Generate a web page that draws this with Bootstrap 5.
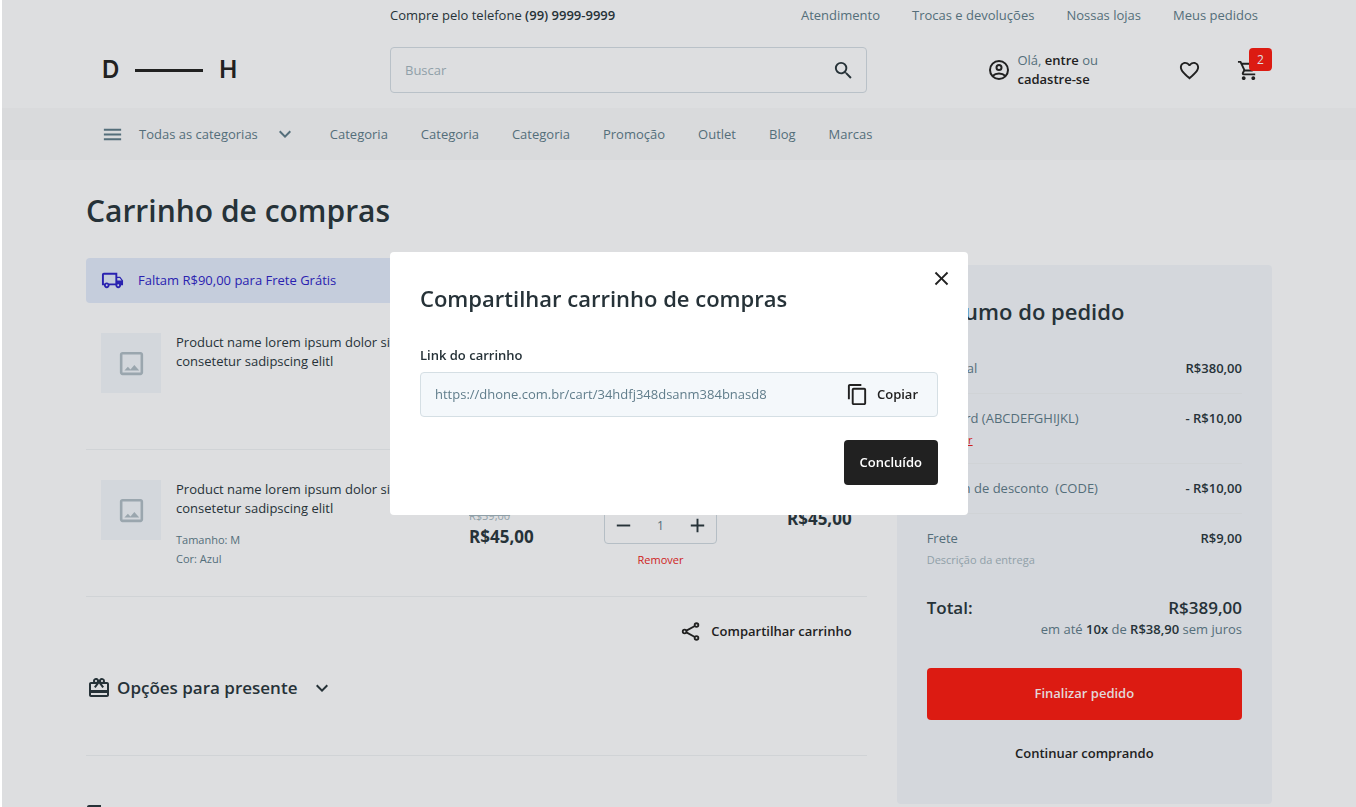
<!DOCTYPE html>
<html lang="pt-BR">
<head>
<meta charset="utf-8">
<meta name="viewport" content="width=device-width, initial-scale=1">
<title>Carrinho de compras</title>
<link href="https://cdn.jsdelivr.net/npm/bootstrap@5.3.0/dist/css/bootstrap.min.css" rel="stylesheet">
<style>
  :root { --ink: #263238; --black: #212121; --slate: #546e7a; --muted: #90a0a8; --line: #d0d3d6; --red: #dc1b12; }
  body { font-family: "Open Sans", sans-serif; font-size: 13px; line-height: 19px; color: var(--ink); background: #fff; padding-left: 2px; }
  .page { background: #dddee0; min-height: 100vh; }
  .shell { max-width: 1186px; margin-inline: auto; }
  .row { --bs-gutter-x: 30px; }
  a { color: var(--slate); text-decoration: none; }
  svg { display: block; fill: currentColor; flex: none; }
  strong, .semi { font-weight: 600; }
  .plain { background: none; border: 0; padding: 0; color: inherit; }
  .ink { color: var(--ink); }
  .black { color: var(--black); }
  .slate { color: var(--slate); }
  .faded { color: var(--muted); }
  .alertred { color: #cf1d22; }
  .fine { font-size: 11px; line-height: 19px; }
  .lined { fill: none; stroke: currentColor; stroke-width: 2; }

  .topbar { padding-top: 6px; }
  .topbar nav { gap: 32px; padding-right: 14px; }
  .masthead { padding: 22px 0 15px; }
  .logo { font: 600 24px/28px Inter, sans-serif; color: var(--black); padding-left: 16px; gap: 16px; }
  .logo i { width: 68px; height: 3px; background: var(--black); }
  .search { border: 1px solid #b9c1c8; border-radius: 4px; height: 46px; padding: 0 11px 0 14px; }
  .search input, .copybox input { font-size: 13px; background: none; border: 0; padding: 0; outline: 0; color: #607d8b; }
  .search input::placeholder { color: var(--muted); opacity: 1; }
  .usertools { padding-right: 12px; }
  .account { gap: 6px; margin-right: 80px; }
  .fav { margin-right: 36px; }
  .count { top: -11px; right: -12px; width: 23px; height: 23px; border-radius: 4px; background: var(--red); color: #dddee0; font-size: 12px; line-height: 23px; text-align: center; }

  .catbar { background: #d9dadc; height: 52px; }
  .catbar .shell { padding-left: 15px; gap: 33px; }
  .catbar button { gap: 15px; color: var(--slate); }

  h1 { font-size: 30px; line-height: 42px; font-weight: 600; margin: 30px 0 0; }
  h2 { font-size: 22px; line-height: 32px; font-weight: 600; margin: 0; }
  .freight { background: #c5cddc; color: #2a22b0; border-radius: 4px; height: 45px; padding: 0 15px; gap: 14px; margin-top: 26px; }
  .product { min-height: 147px; padding: 30px 15px 27px; border-bottom: 1px solid var(--line); }
  .thumb { width: 60px; height: 60px; background: #d3d7dc; color: #9aa6ae; margin-right: 15px; flex: none; }
  .desc { width: 293px; }
  .price { width: 135px; padding-top: 26px; }
  .amount { font-size: 17px; line-height: 24px; font-weight: 700; }
  .qty { width: 113px; padding-top: 26px; }
  .stepper { height: 38px; border: 1px solid #b5bec5; border-radius: 4px; padding: 0 7px; margin-bottom: 6px; }
  .stepper input { width: 30px; border: 0; background: none; text-align: center; color: var(--slate); padding: 0; font-size: 12px; }
  .sum { padding-top: 27px; }
  .share { padding: 23px 15px 0; }
  .share button { gap: 9px; }
  .extra { border-bottom: 1px solid var(--line); padding: 33px 0 55px; }
  .extra button { font-size: 17px; line-height: 24px; font-weight: 600; gap: 6px; padding-left: 1px; }
  .chev { margin-left: 7px; }
  .nextpart { padding-top: 46px; }

  .summary { background: #d4d7dc; border-radius: 4px; padding: 30px; margin-top: 33px; }
  .summary dl { margin: 17px 0 0; }
  .entry { padding: 15px 0; border-bottom: 1px solid var(--line); }
  .entry:last-child { border: 0; }
  .summary dt { font-weight: 400; color: var(--slate); }
  .summary dd { margin: 0; font-weight: 600; }
  .subline { margin-top: 3px; line-height: 17px; font-size: 11px; }
  .grand { font-size: 17px; line-height: 24px; font-weight: 600; margin-top: 13px; }
  .btn { font-size: 13px; font-weight: 600; border-radius: 4px; border: 0; }
  .btn-pay, .btn-pay:hover { background: var(--red); color: #e3d7d9; height: 52px; margin-top: 29px; }
  .btn-more { height: 40px; margin-top: 14px; color: var(--black); }

  .modal { --bs-modal-width: 578px; left: 2px; width: auto; right: 0; }
  .modal-dialog { margin-top: 252px; }
  .modal-content { border: 0; border-radius: 4px; padding: 30px; color: var(--ink); }
  .dismiss { top: 15px; right: 15px; color: var(--black); }
  .modal label { margin: 32px 0 7px; font-weight: 600; }
  .copybox { background: #f4f8fb; border: 1px solid #d5dfe4; border-radius: 4px; height: 45px; padding: 0 19px 0 14px; }
  .copybox button { gap: 8px; }
  .btn-done, .btn-done:hover { background: var(--black); color: #fff; height: 45px; padding: 0 16px; margin-top: 23px; }
</style>
</head>
<body class="overflow-hidden">
<div class="page">
  <header>
    <div class="shell topbar">
      <div class="row">
        <div class="col-9 offset-3 d-flex justify-content-between">
          <span>Compre pelo telefone <strong>(99) 9999-9999</strong></span>
          <nav class="d-flex" aria-label="Ajuda">
            <a href="#">Atendimento</a><a href="#">Trocas e devoluções</a><a href="#">Nossas lojas</a><a href="#">Meus pedidos</a>
          </nav>
        </div>
      </div>
    </div>
    <div class="shell masthead">
      <div class="row align-items-center">
        <div class="col-3"><a href="#" class="logo d-flex align-items-center"><span>D</span><i></i><span>H</span></a></div>
        <div class="col-5">
          <form class="search d-flex align-items-center">
            <input class="flex-grow-1" type="search" placeholder="Buscar" aria-label="Buscar">
            <button type="button" class="plain ink" aria-label="Pesquisar"><svg width="23" height="23" viewBox="0 0 24 24"><path d="M15.5 14h-.79l-.28-.27A6.47 6.47 0 0 0 16 9.500 6.500 6.500 0 1 0 9.500 16c1.610 0 3.090-.59 4.230-1.570l.27.28v.79l5 4.990L20.490 19l-4.990-5zm-6 0C7.010 14 5 11.990 5 9.500S7.010 5 9.500 5 14 7.010 14 9.500 11.990 14 9.500 14z"/></svg></button>
          </form>
        </div>
        <div class="col-4">
          <div class="usertools d-flex align-items-center justify-content-end black">
            <div class="account d-flex align-items-center">
              <svg class="lined" width="24" height="24" viewBox="0 0 24 24"><circle cx="12" cy="12" r="9"/><circle cx="12" cy="9.500" r="2.500"/><path d="M5.500 18c1.800-1.600 4-2.400 6.500-2.400s4.700.8 6.500 2.400"/></svg>
              <div class="slate">Olá, <a href="#" class="semi black">entre</a> ou<br><a href="#" class="semi black">cadastre-se</a></div>
            </div>
            <a href="#" class="fav black" aria-label="Favoritos"><svg width="23" height="23" viewBox="0 0 24 24"><path d="M16.500 3c-1.740 0-3.410.81-4.500 2.090C10.910 3.810 9.240 3 7.500 3 4.420 3 2 5.420 2 8.500c0 3.780 3.400 6.860 8.550 11.540L12 21.350l1.450-1.320C18.600 15.360 22 12.280 22 8.500 22 5.420 19.580 3 16.500 3zm-4.400 15.550-.1.1-.1-.1C7.140 14.240 4 11.390 4 8.500 4 6.500 5.500 5 7.500 5c1.540 0 3.040.99 3.570 2.360h1.870C13.460 5.990 14.960 5 16.500 5c2 0 3.500 1.500 3.500 3.500 0 2.890-3.140 5.740-7.900 10.050z"/></svg></a>
            <a href="#" class="position-relative black" aria-label="Carrinho"><svg width="23" height="23" viewBox="0 0 24 24"><path d="M15.550 13c.75 0 1.410-.41 1.750-1.030l3.580-6.490A.996.996 0 0 0 20.010 4H5.210l-.94-2H1v2h2l3.600 7.590-1.350 2.440C4.520 15.370 5.480 17 7 17h12v-2H7l1.100-2h7.450zM6.160 6h12.150l-2.760 5H8.530L6.160 6zM7 18c-1.100 0-1.990.9-1.990 2S5.900 22 7 22s2-.9 2-2-.9-2-2-2zm10 0c-1.100 0-1.990.9-1.990 2s.89 2 1.990 2 2-.9 2-2-.9-2-2-2z"/></svg><span class="count position-absolute">2</span></a>
          </div>
        </div>
      </div>
    </div>
    <nav class="catbar" aria-label="Categorias">
      <div class="shell d-flex align-items-center h-100">
        <button type="button" class="plain slate d-flex align-items-center">
          <svg width="23" height="23" viewBox="0 0 24 24"><path d="M3 18h18v-2H3v2zm0-5h18v-2H3v2zm0-7v2h18V6H3z"/></svg>
          Todas as categorias
          <svg width="24" height="24" viewBox="0 0 24 24"><path d="M7.410 8.590 12 13.170l4.590-4.580L18 10l-6 6-6-6z"/></svg>
        </button>
        <a href="#">Categoria</a><a href="#">Categoria</a><a href="#">Categoria</a><a href="#">Promoção</a><a href="#">Outlet</a><a href="#">Blog</a><a href="#">Marcas</a>
      </div>
    </nav>
  </header>

  <main class="shell">
    <h1>Carrinho de compras</h1>
    <div class="row">
      <section class="col-8">
        <div class="freight d-flex align-items-center">
          <svg width="23" height="23" viewBox="0 0 24 24"><path fill-rule="evenodd" d="M20 8h-3V4H3c-1.100 0-2 .9-2 2v11h2c0 1.660 1.340 3 3 3s3-1.340 3-3h6c0 1.660 1.340 3 3 3s3-1.340 3-3h2v-5l-3-4zM6 18c-.55 0-1-.45-1-1s.45-1 1-1 1 .45 1 1-.45 1-1 1zm9-3H8.220C7.670 14.390 6.880 14 6 14s-1.670.39-2.220 1H3V6h12v9zm3 3c-.55 0-1-.45-1-1s.45-1 1-1 1 .45 1 1-.45 1-1 1zm-1-6V9.500h2.500l1.960 2.500H17z"/></svg>
          Faltam R$90,00 para Frete Grátis
        </div>

        <article class="product d-flex">
          <div class="thumb d-flex align-items-center justify-content-center"><svg width="31" height="31" viewBox="0 0 24 24"><path d="M19 5v14H5V5h14m0-2H5c-1.100 0-2 .9-2 2v14c0 1.100.9 2 2 2h14c1.100 0 2-.9 2-2V5c0-1.100-.9-2-2-2zm-4.800 10.200-3 3.500-2-2.200-2.700 3h11.500z"/></svg></div>
          <div class="desc">Product name lorem ipsum dolor sit<br>consetetur sadipscing elitl</div>
        </article>

        <article class="product d-flex">
          <div class="thumb d-flex align-items-center justify-content-center"><svg width="31" height="31" viewBox="0 0 24 24"><path d="M19 5v14H5V5h14m0-2H5c-1.100 0-2 .9-2 2v14c0 1.100.9 2 2 2h14c1.100 0 2-.9 2-2V5c0-1.100-.9-2-2-2zm-4.800 10.200-3 3.500-2-2.200-2.700 3h11.500z"/></svg></div>
          <div class="desc">Product name lorem ipsum dolor sit<br>consetetur sadipscing elitl
            <div class="fine slate mt-2 pt-1">Tamanho: M<br>Cor: Azul</div>
          </div>
          <div class="price"><s class="fine d-block faded">R$59,00</s><span class="amount">R$45,00</span></div>
          <div class="qty text-center">
            <div class="stepper d-flex align-items-center justify-content-between">
              <button type="button" class="plain ink" aria-label="Diminuir"><svg width="23" height="23" viewBox="0 0 24 24"><path d="M19 13H5v-2h14z"/></svg></button>
              <input type="text" value="1" aria-label="Quantidade">
              <button type="button" class="plain ink" aria-label="Aumentar"><svg width="23" height="23" viewBox="0 0 24 24"><path d="M19 13h-6v6h-2v-6H5v-2h6V5h2v6h6z"/></svg></button>
            </div>
            <button type="button" class="plain fine alertred">Remover</button>
          </div>
          <div class="sum amount ms-auto">R$45,00</div>
        </article>

        <div class="share d-flex justify-content-end black">
          <button type="button" class="plain semi d-flex align-items-center">
            <svg class="lined" width="22" height="23" viewBox="0 0 24 24"><circle cx="18" cy="5" r="2"/><circle cx="5" cy="12" r="2"/><circle cx="18" cy="19" r="2"/><path d="m7 11 9.200-5M7 13l9.200 5"/></svg>
            Compartilhar carrinho
          </button>
        </div>

        <div class="extra">
          <button type="button" class="plain d-flex align-items-center">
            <svg width="24" height="24" viewBox="0 0 24 24"><path d="M20 6h-2.180c.11-.31.18-.65.18-1a2.996 2.996 0 0 0-5.500-1.650l-.5.67-.5-.68C10.960 2.540 10.050 2 9 2 7.340 2 6 3.340 6 5c0 .35.07.69.18 1H4c-1.110 0-1.990.89-1.990 2L2 19c0 1.110.89 2 2 2h16c1.110 0 2-.89 2-2V8c0-1.110-.89-2-2-2zm-5-2c.55 0 1 .45 1 1s-.45 1-1 1-1-.45-1-1 .45-1 1-1zM9 4c.55 0 1 .45 1 1s-.45 1-1 1-1-.45-1-1 .45-1 1-1zm11 15H4v-2h16v2zm0-5H4V8h5.080L7 10.830 8.620 12 12 7.400l3.380 4.600L17 10.830 14.920 8H20v6z"/></svg>
            Opções para presente
            <svg class="chev" width="24" height="24" viewBox="0 0 24 24"><path d="M7.410 8.590 12 13.170l4.590-4.580L18 10l-6 6-6-6z"/></svg>
          </button>
        </div>
        <div class="nextpart">
          <svg width="24" height="24" viewBox="0 0 24 24"><path d="M15 3H3c-1.100 0-2 .9-2 2v14h2V5h12zM18 7H6v14h12z"/></svg>
        </div>
      </section>

      <aside class="col-4">
        <div class="summary">
          <h2>Resumo do pedido</h2>
          <dl>
            <div class="entry d-flex justify-content-between"><dt>Subtotal</dt><dd>R$380,00</dd></div>
            <div class="entry d-flex justify-content-between"><dt>Gift card (ABCDEFGHIJKL)<br><a href="#" class="subline d-block alertred text-decoration-underline">Remover</a></dt><dd>- R$10,00</dd></div>
            <div class="entry d-flex justify-content-between"><dt>Cupom de desconto &nbsp;(CODE)</dt><dd>- R$10,00</dd></div>
            <div class="entry d-flex justify-content-between"><dt>Frete<div class="subline faded">Descrição da entrega</div></dt><dd>R$9,00</dd></div>
          </dl>
          <div class="grand d-flex justify-content-between"><span>Total:</span><span>R$389,00</span></div>
          <div class="text-end slate">em até <strong class="ink">10x</strong> de <strong class="ink">R$38,90</strong> sem juros</div>
          <button type="button" class="btn btn-pay w-100">Finalizar pedido</button>
          <button type="button" class="btn btn-more w-100">Continuar comprando</button>
        </div>
      </aside>
    </div>
  </main>
</div>

<div class="modal d-block" role="dialog" aria-labelledby="share-title">
  <div class="modal-dialog">
    <div class="modal-content">
      <button type="button" class="plain dismiss position-absolute" aria-label="Fechar"><svg width="23" height="23" viewBox="0 0 24 24"><path d="M19 6.410 17.590 5 12 10.590 6.410 5 5 6.410 10.590 12 5 17.590 6.410 19 12 13.410 17.590 19 19 17.590 13.410 12z"/></svg></button>
      <h2 id="share-title">Compartilhar carrinho de compras</h2>
      <label for="share-link">Link do carrinho</label>
      <div class="copybox d-flex align-items-center">
        <input id="share-link" class="flex-grow-1" type="text" readonly value="https://dhone.com.br/cart/34hdfj348dsanm384bnasd8">
        <button type="button" class="plain semi black d-flex align-items-center"><svg width="23" height="23" viewBox="0 0 24 24"><path d="M16 1H4c-1.100 0-2 .9-2 2v14h2V3h12V1zm3 4H8c-1.100 0-2 .9-2 2v14c0 1.100.9 2 2 2h11c1.100 0 2-.9 2-2V7c0-1.100-.9-2-2-2zm0 16H8V7h11v14z"/></svg>Copiar</button>
      </div>
      <button type="button" class="btn btn-done align-self-end">Concluído</button>
    </div>
  </div>
</div>
<script src="https://cdn.jsdelivr.net/npm/bootstrap@5.3.0/dist/js/bootstrap.bundle.min.js"></script>
</body>
</html>
